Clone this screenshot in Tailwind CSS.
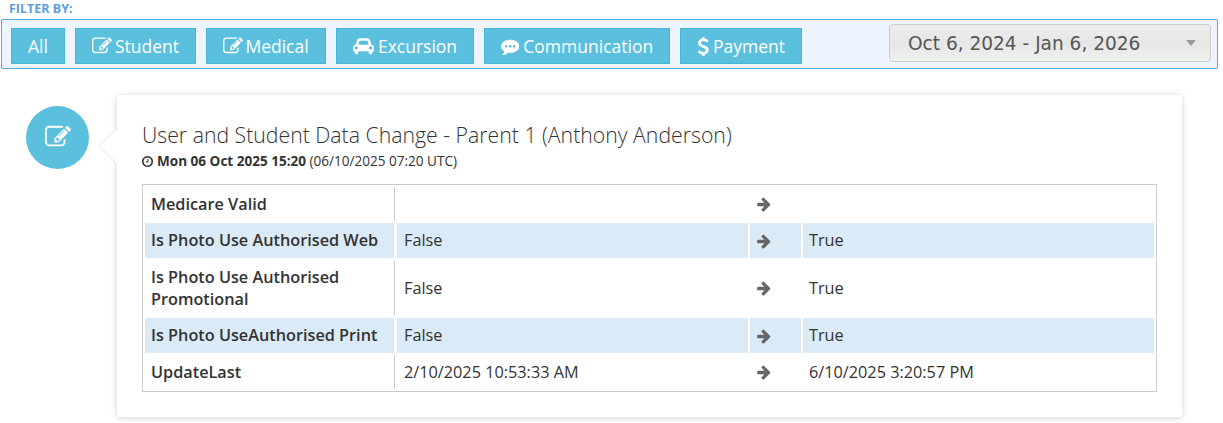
<!DOCTYPE html>
<html lang="en">

<head>
    <meta charset="UTF-8">
    <title>Timeline</title>
    <script src="https://cdn.jsdelivr.net/npm/@tailwindcss/browser@4"></script>
</head>

<body class="bg-white font-['Open_Sans',sans-serif] text-[#333]">

    <!-- Filter -->
    <div class="pt-[2px] pl-[1px] pr-[5px]">
        <div class="pl-[8px] h-[17px] leading-[14px] text-[12.5px] font-bold text-[#5a9fdc]">FILTER BY:</div>
        <div class="flex items-start justify-between h-[50px] bg-[#edf4fd] border border-[#55a7e4] rounded-[2px] pl-[9px] pr-[6px] pt-[8px]">
            <div class="flex gap-[10px] text-[17.5px] text-white">
                <button class="w-[54px] h-[36px] flex items-center justify-center bg-[#5bc0de] border border-[#46b8da]">All</button>
                <button class="w-[121px] h-[36px] flex items-center justify-center gap-[3px] bg-[#5bc0de] border border-[#46b8da]">
                    <svg class="w-[20px] h-[20px] fill-white" viewBox="0 0 1792 1792"><path d="M888 1184l116-116-152-152-116 116v56h96v96h56zm440-720q-16-16-33 1l-350 350q-17 17-1 33t33-1l350-350q17-17 1-33zm80 594v190q0 119-84.5 203.5t-203.5 84.5h-832q-119 0-203.5-84.5t-84.5-203.5v-832q0-119 84.5-203.5t203.5-84.5h832q63 0 117 25 15 7 18 23 3 17-9 29l-49 49q-14 14-32 8-23-6-45-6h-832q-66 0-113 47t-47 113v832q0 66 47 113t113 47h832q66 0 113-47t47-113v-126q0-13 9-22l64-64q15-15 35-7t20 29zm-96-738l288 288-672 672h-288v-288zm444 132l-92 92-288-288 92-92q28-28 68-28t68 28l152 152q28 28 28 68t-28 68z"/></svg>
                    Student</button>
                <button class="w-[120px] h-[36px] flex items-center justify-center gap-[2px] bg-[#5bc0de] border border-[#46b8da]">
                    <svg class="w-[20px] h-[20px] fill-white" viewBox="0 0 1792 1792"><path d="M888 1184l116-116-152-152-116 116v56h96v96h56zm440-720q-16-16-33 1l-350 350q-17 17-1 33t33-1l350-350q17-17 1-33zm80 594v190q0 119-84.5 203.5t-203.5 84.5h-832q-119 0-203.5-84.5t-84.5-203.5v-832q0-119 84.5-203.5t203.5-84.5h832q63 0 117 25 15 7 18 23 3 17-9 29l-49 49q-14 14-32 8-23-6-45-6h-832q-66 0-113 47t-47 113v832q0 66 47 113t113 47h832q66 0 113-47t47-113v-126q0-13 9-22l64-64q15-15 35-7t20 29zm-96-738l288 288-672 672h-288v-288zm444 132l-92 92-288-288 92-92q28-28 68-28t68 28l152 152q28 28 28 68t-28 68z"/></svg>
                    Medical</button>
                <button class="w-[138px] h-[36px] flex items-center justify-center gap-[4px] bg-[#5bc0de] border border-[#46b8da]">
                    <svg class="w-[21px] h-[18px] fill-white" viewBox="0 0 2048 1792"><path d="M480 1088q0-66-47-113t-113-47-113 47-47 113 47 113 113 47 113-47 47-113zm36-320h1016l-89-357q-2-8-14-17.5t-21-9.5h-768q-9 0-21 9.5t-14 17.5zm1372 320q0-66-47-113t-113-47-113 47-47 113 47 113 113 47 113-47 47-113zm160-96v384q0 14-9 23t-23 9h-96v128q0 80-56 136t-136 56-136-56-56-136v-128h-1024v128q0 80-56 136t-136 56-136-56-56-136v-128h-96q-14 0-23-9t-9-23v-384q0-93 65.5-158.5t158.5-65.5h28l105-419q23-94 104-157.5t179-63.5h768q98 0 179 63.5t104 157.5l105 419h28q93 0 158.5 65.5t65.5 158.5z"/></svg>
                    Excursion</button>
                <button class="w-[186px] h-[36px] flex items-center justify-center gap-[4px] bg-[#5bc0de] border border-[#46b8da]">
                    <svg class="w-[18.5px] h-[18.5px] fill-white" viewBox="0 0 1792 1792"><path d="M640 896q0-53-37.5-90.5t-90.5-37.5-90.5 37.5-37.5 90.5 37.5 90.5 90.5 37.5 90.5-37.5 37.5-90.5zm384 0q0-53-37.5-90.5t-90.5-37.5-90.5 37.5-37.5 90.5 37.5 90.5 90.5 37.5 90.5-37.5 37.5-90.5zm384 0q0-53-37.5-90.5t-90.5-37.5-90.5 37.5-37.5 90.5 37.5 90.5 90.5 37.5 90.5-37.5 37.5-90.5zm384 0q0 174-120 321.5t-326 233-450 85.5q-110 0-211-18-173 173-435 229-52 10-86 13-12 1-22-6t-13-18q-4-15 20-37 5-5 23.5-21.5t25.5-23.5 23.5-25.5 24-31.5 20.5-37 20-48 14.5-57.5 12.5-72.5q-146-90-229.5-216.5t-83.5-269.5q0-174 120-321.5t326-233 450-85.5 450 85.5 326 233 120 321.5z"/></svg>
                    Communication</button>
                <button class="w-[122px] h-[36px] flex items-center justify-center gap-[4px] bg-[#5bc0de] border border-[#46b8da]">
                    <svg class="w-[12px] h-[19px] fill-white" viewBox="362 80 1020 1632"><path d="M1362 1185q0 153-99.5 263.5t-258.5 136.5v175q0 14-9 23t-23 9h-135q-13 0-22.5-9.5t-9.5-22.5v-175q-66-9-127.5-31t-101.5-44.5-74-48-46.5-37.5-17.5-18q-17-21-2-41l103-135q7-10 23-12 15-2 24 9l2 2q113 99 243 125 37 8 74 8 81 0 142.5-43t61.5-122q0-28-15-53t-33.5-42-58.5-37.5-66-32-80-32.5q-39-16-61.5-25t-61.5-26.5-62.5-31-56.5-35.5-53.5-42.5-43.5-49-35.5-58-21-66.5-8.5-78q0-138 98-242t255-134v-180q0-13 9.5-22.5t22.5-9.5h135q14 0 23 9t9 23v176q57 6 110.5 23t87 33.5 63.5 37.5 39 29 15 14q17 18 5 38l-81 146q-8 15-23 16-14 3-27-7-3-3-14.5-12t-39-26.5-58.5-32-74.5-26-85.5-11.5q-95 0-155 43t-60 111q0 26 8.5 48t29.5 41.5 39.5 33 56 31 60.5 27 70 27.5q53 20 81 31.5t76 35 75.5 42.5 62 50 53 63.5 31.5 76.5 13 94z"/></svg>
                    Payment</button>
            </div>
            <!-- Date range -->
            <div class="-mt-[4px] w-[322px] h-[38px] flex items-center justify-between pl-[18px] pr-[14px] rounded-[4px] border border-[#ccc] bg-gradient-to-b from-[#eee] via-[#e6e6e6] to-[#f0f0f0] font-['DejaVu_Sans',sans-serif] text-[18.55px] text-[#555]">
                <span class="pt-[1px]">Oct 6, 2024 - Jan 6, 2026</span>
                <span class="w-0 h-0 border-x-[5px] border-x-transparent border-t-[6px] border-t-[#999]"></span>
            </div>
        </div>
    </div>

    <!-- Timeline entry -->
    <div class="flex items-start pl-[26px] pt-[26px] pb-[6px]">
        <div class="mt-[11px] pb-[2px] w-[63px] h-[63px] rounded-full bg-[#5bc0de] flex items-center justify-center shrink-0">
            <svg class="w-[26px] h-[26px] fill-white" viewBox="0 0 1792 1792"><path d="M888 1184l116-116-152-152-116 116v56h96v96h56zm440-720q-16-16-33 1l-350 350q-17 17-1 33t33-1l350-350q17-17 1-33zm80 594v190q0 119-84.5 203.5t-203.5 84.5h-832q-119 0-203.5-84.5t-84.5-203.5v-832q0-119 84.5-203.5t203.5-84.5h832q63 0 117 25 15 7 18 23 3 17-9 29l-49 49q-14 14-32 8-23-6-45-6h-832q-66 0-113 47t-47 113v832q0 66 47 113t113 47h832q66 0 113-47t47-113v-126q0-13 9-22l64-64q15-15 35-7t20 29zm-96-738l288 288-672 672h-288v-288zm444 132l-92 92-288-288 92-92q28-28 68-28t68 28l152 152q28 28 28 68t-28 68z"/></svg>
        </div>
        <div class="relative ml-[28px] w-[1065px] h-[322px] bg-white rounded-[2px] shadow-[0_1px_6px_rgba(0,0,0,0.18)] pt-[25px] px-[25px]">
            <svg class="absolute left-[-19px] top-[33px]" width="20" height="36" viewBox="0 0 20 36"><path d="M19.5 0 L0.8 18 L19.5 36" fill="#fff" stroke="#e4e4e4"/></svg>
            <h3 class="text-[21.25px] font-light leading-[30px] text-[#333]">User and Student Data Change - Parent 1 (Anthony Anderson)</h3>
            <div class="flex items-center gap-[3px] text-[13.55px] leading-[20px] h-[20px] mt-[1px] mb-[13px]">
                <svg class="-ml-[1px] w-[13px] h-[13px] fill-[#333]" viewBox="0 0 1792 1792"><path d="M1024 544v448q0 14-9 23t-23 9h-320q-14 0-23-9t-9-23v-64q0-14 9-23t23-9h224v-352q0-14 9-23t23-9h64q14 0 23 9t9 23zm416 352q0-148-73-273t-198-198-273-73-273 73-198 198-73 273 73 273 198 198 273 73 273-73 198-198 73-273zm224 0q0 209-103 385.5t-279.5 279.5-385.5 103-385.5-103-279.5-279.5-103-385.5 103-385.5 279.5-279.5 385.5-103 385.5 103 279.5 279.5 103 385.5z"/></svg>
                <span><b class="font-bold">Mon 06 Oct 2025 15:20</b> (06/10/2025 07:20 UTC)</span>
            </div>
            <table class="w-[1015px] table-fixed border border-[#ccc] border-separate border-spacing-[2px] text-[16.25px] leading-[22px]">
                <colgroup>
                    <col class="w-[250px]"><col class="w-[351px]"><col class="w-[51px]"><col>
                </colgroup>
                <tbody>
                    <tr class="h-[34px]">
                        <td class="px-[6px] font-semibold border-r border-[#ccc]">Medicare Valid</td>
                        <td class="px-[7px]"></td>
                        <td class="pl-[6px]"><svg class="w-[16px] h-[16px] fill-[#666]" viewBox="0 0 1792 1792"><path d="M1600 960q0 54-37 91l-651 651q-39 37-91 37-51 0-90-37l-75-75q-38-38-38-91t38-91l293-293h-704q-52 0-84.5-37.5t-32.5-90.5v-128q0-53 32.5-90.5t84.5-37.5h704l-293-294q-38-36-38-90t38-90l75-75q38-38 90-38 53 0 91 38l651 651q37 35 37 90z"/></svg></td>
                        <td class="px-[6px]"></td>
                    </tr>
                    <tr class="h-[35px] bg-[#dbeaf7]">
                        <td class="px-[6px] pb-[1px] font-semibold border-r border-white">Is Photo Use Authorised Web</td>
                        <td class="px-[7px] pb-[1px]">False</td>
                        <td class="pl-[6px]"><svg class="w-[16px] h-[16px] fill-[#666]" viewBox="0 0 1792 1792"><path d="M1600 960q0 54-37 91l-651 651q-39 37-91 37-51 0-90-37l-75-75q-38-38-38-91t38-91l293-293h-704q-52 0-84.5-37.5t-32.5-90.5v-128q0-53 32.5-90.5t84.5-37.5h704l-293-294q-38-36-38-90t38-90l75-75q38-38 90-38 53 0 91 38l651 651q37 35 37 90z"/></svg></td>
                        <td class="px-[6px] pb-[1px]">True</td>
                    </tr>
                    <tr class="h-[56px]">
                        <td class="px-[6px] font-semibold border-r border-[#ccc]">Is Photo Use Authorised Promotional</td>
                        <td class="px-[7px]">False</td>
                        <td class="pl-[6px]"><svg class="w-[16px] h-[16px] fill-[#666]" viewBox="0 0 1792 1792"><path d="M1600 960q0 54-37 91l-651 651q-39 37-91 37-51 0-90-37l-75-75q-38-38-38-91t38-91l293-293h-704q-52 0-84.5-37.5t-32.5-90.5v-128q0-53 32.5-90.5t84.5-37.5h704l-293-294q-38-36-38-90t38-90l75-75q38-38 90-38 53 0 91 38l651 651q37 35 37 90z"/></svg></td>
                        <td class="px-[6px]">True</td>
                    </tr>
                    <tr class="h-[35px] bg-[#dbeaf7]">
                        <td class="px-[6px] pb-[1px] font-semibold border-r border-white">Is Photo UseAuthorised Print</td>
                        <td class="px-[7px] pb-[1px]">False</td>
                        <td class="pl-[6px]"><svg class="w-[16px] h-[16px] fill-[#666]" viewBox="0 0 1792 1792"><path d="M1600 960q0 54-37 91l-651 651q-39 37-91 37-51 0-90-37l-75-75q-38-38-38-91t38-91l293-293h-704q-52 0-84.5-37.5t-32.5-90.5v-128q0-53 32.5-90.5t84.5-37.5h704l-293-294q-38-36-38-90t38-90l75-75q38-38 90-38 53 0 91 38l651 651q37 35 37 90z"/></svg></td>
                        <td class="px-[6px] pb-[1px]">True</td>
                    </tr>
                    <tr class="h-[34px]">
                        <td class="px-[6px] font-semibold border-r border-[#ccc]">UpdateLast</td>
                        <td class="px-[7px]">2/10/2025 10:53:33 AM</td>
                        <td class="pl-[6px]"><svg class="w-[16px] h-[16px] fill-[#666]" viewBox="0 0 1792 1792"><path d="M1600 960q0 54-37 91l-651 651q-39 37-91 37-51 0-90-37l-75-75q-38-38-38-91t38-91l293-293h-704q-52 0-84.5-37.5t-32.5-90.5v-128q0-53 32.5-90.5t84.5-37.5h704l-293-294q-38-36-38-90t38-90l75-75q38-38 90-38 53 0 91 38l651 651q37 35 37 90z"/></svg></td>
                        <td class="px-[6px]">6/10/2025 3:20:57 PM</td>
                    </tr>
                </tbody>
            </table>
        </div>
    </div>

</body>

</html>
